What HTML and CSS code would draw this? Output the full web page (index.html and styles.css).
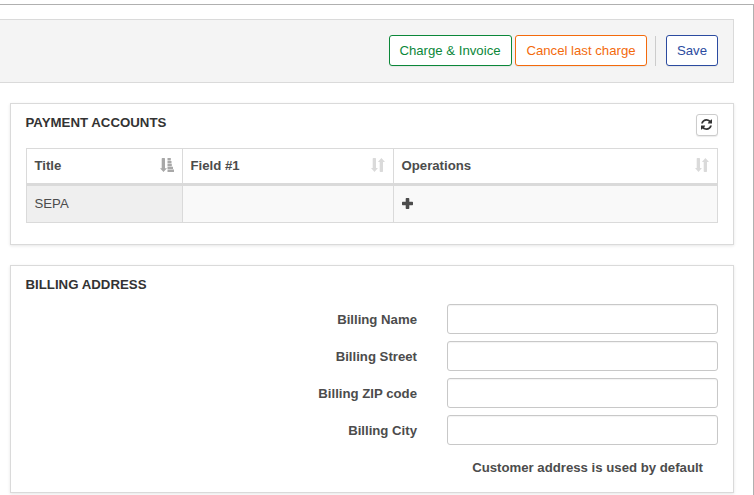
FILE: index.html
```html
<!DOCTYPE html>
<html lang="en">
<head>
<meta charset="utf-8">
<title>Customer billing</title>
<link rel="stylesheet" href="styles.css">
</head>
<body>
<svg class="defs" aria-hidden="true">
  <symbol id="sort" viewBox="0 0 14 14"><path d="M1.700 .7Q1.700 0 2.400 0H4.300Q5 0 5 .7V10H6.900L3.500 14 0 10H1.700zM8.700 13.300Q8.700 14 9.400 14H11.300Q12 14 12 13.300V4H14L10.400 0 6.900 4H8.700z"/></symbol>
  <symbol id="sort-asc" viewBox="0 0 14 14"><path d="M1.700 .7Q1.700 0 2.400 0H4.300Q5 0 5 .7V10.300H7L3.500 14 0 10.300H1.700zM7.500 0h3.300v2.400H7.500zM7.500 2.900h4v2.400h-4zM7.500 5.800h4.300v2.400H7.500zM7.500 8.700h5.500v2.300H7.500zM7.500 11.500H14V14H7.500z"/></symbol>
</svg>
<main class="frame">
  <div class="toolbar">
    <button class="btn green">Charge &amp; Invoice</button>
    <button class="btn orange">Cancel last charge</button>
    <span class="divider"></span>
    <button class="btn blue">Save</button>
  </div>
  <section class="panel accounts">
    <header class="panel-head">
      <h2>PAYMENT ACCOUNTS</h2>
      <button class="refresh" aria-label="Refresh"><svg viewBox="0 0 1536 1536"><path d="M1511 928q0 5-1 7-64 268-268 434.5t-478 166.5q-146 0-282.500-55t-243.500-157l-129 129q-19 19-45 19t-45-19-19-45v-448q0-26 19-45t45-19h448q26 0 45 19t19 45-19 45l-137 137q71 66 161 102t187 36q134 0 250-65t186-179q11-17 53-117 8-23 30-23h192q13 0 22.500 9.500t9.500 22.500zm25-800v448q0 26-19 45t-45 19h-448q-26 0-45-19t-19-45 19-45l138-138q-148-137-349-137-134 0-250 65t-186 179q-11 17-53 117-8 23-30 23h-199q-13 0-22.500-9.500t-9.500-22.500v-7q65-268 270-434.500t480-166.500q146 0 284 55.500t245 156.500l130-129q19-19 45-19t45 19 19 45z"/></svg></button>
    </header>
    <table>
      <colgroup><col class="c1"><col class="c2"><col class="c3"></colgroup>
      <thead><tr>
        <th><div class="th">Title<svg class="sort active"><use href="#sort-asc"/></svg></div></th>
        <th><div class="th">Field #1<svg class="sort"><use href="#sort"/></svg></div></th>
        <th><div class="th">Operations<svg class="sort"><use href="#sort"/></svg></div></th>
      </tr></thead>
      <tbody><tr>
        <td class="sorted">SEPA</td><td></td>
        <td><svg class="plus" viewBox="0 0 11 11"><path d="M4.400 0h2.200q.7 0 .7.700v3.100h3q.7 0 .7.700v2q0 .7-.7.700h-3v3.100q0 .7-.7.700H4.400q-.7 0-.7-.7V7.200h-3Q0 7.200 0 6.500v-2q0-.7.7-.7h3V.7q0-.7.7-.7z"/></svg></td>
      </tr></tbody>
    </table>
  </section>
  <section class="panel address">
    <h2>BILLING ADDRESS</h2>
    <form>
      <label for="name">Billing Name</label><input id="name">
      <label for="street">Billing Street</label><input id="street">
      <label for="zip">Billing ZIP code</label><input id="zip">
      <label for="city">Billing City</label><input id="city">
    </form>
    <p class="note">Customer address is used by default</p>
  </section>
</main>
</body>
</html>
```
FILE: styles.css
```css
* { box-sizing: border-box; }
body {
  margin: 0;
  padding-top: 4px;
  height: 495px;
  overflow: hidden;
  background: #fff;
  color: #4c4c4c;
  font: 13.2px/20px "Liberation Sans", Arial, sans-serif;
}
.defs { display: none; }
svg { display: block; fill: currentColor; }
.frame {
  height: 491px;
  padding: 14px 19px 0 0;
  border-top: 1px solid #b0b0b0;
  border-right: 1px solid #b0b0b0;
}
.toolbar {
  display: flex;
  justify-content: flex-end;
  height: 64px;
  padding: 15px 15px 0 0;
  border: 1px solid #dadada;
  border-left: 0;
  background: #f4f4f4;
}
.btn {
  height: 31px;
  padding: 0;
  border: 1px solid currentColor;
  border-radius: 3px;
  background: #fff;
  font: inherit;
  box-shadow: 0 1px 1px rgba(0, 0, 0, .06);
}
.green { width: 123px; margin-right: 3px; padding-right: 1px; color: #0b8739; }
.orange { width: 132px; color: #f36a0c; }
.blue { width: 52px; color: #2b4ba0; }
.divider { width: 1px; height: 30px; margin: 1px 10px 0 8px; background: #ccc; }
.panel {
  margin: 20px 0 0 10px;
  padding: 10px 15px 0;
  border: 1px solid #dadada;
  box-shadow: 0 1px 3px rgba(0, 0, 0, .1);
}
.accounts { height: 142px; }
.address { height: 228px; }
.panel-head { display: flex; justify-content: space-between; height: 34px; }
h2 {
  margin: 0 0 0 -.5px;
  color: #333;
  font-size: 13.25px;
  line-height: 18px;
}
.refresh {
  display: flex;
  align-items: center;
  justify-content: center;
  width: 22px;
  height: 22px;
  padding: 0 1px 1px 0;
  border: 1px solid #ccc;
  border-radius: 3px;
  background: #fff;
  color: #333;
  box-shadow: 0 1px 1px rgba(0, 0, 0, .08);
}
.refresh svg { width: 11px; height: 11px; }
table {
  width: 692px;
  border-collapse: separate;
  border-spacing: 0;
  table-layout: fixed;
  border-top: 1px solid #dadada;
  border-left: 1px solid #dadada;
}
.c1 { width: 156px; }
.c2 { width: 211px; }
th, td { padding: 0 8px 0 7.5px; border-right: 1px solid #dadada; text-align: left; }
th { height: 37px; border-bottom: 3px solid #dadada; }
td { height: 37px; border-bottom: 1px solid #dadada; background: #f9f9f9; }
td.sorted { background: #efefef; }
.th { display: flex; align-items: center; justify-content: space-between; }
.sort { width: 14px; height: 14px; margin-bottom: 2px; color: #dadada; }
.sort.active { color: #a8a8a8; }
.plus { width: 11px; height: 11px; margin-bottom: 1px; }
form {
  display: grid;
  grid-template-columns: 391px 271px;
  column-gap: 30px;
  row-gap: 7px;
  margin-top: 10px;
}
label {
  height: 30px;
  padding-top: 1px;
  font-weight: bold;
  line-height: 30px;
  text-align: right;
}
input {
  width: 271px;
  height: 30px;
  border: 1px solid #c8c8c8;
  border-radius: 3px;
  background: #fff;
  box-shadow: inset 0 1px 1px rgba(0, 0, 0, .05);
}
.note { margin: 13px 15px 0 0; font-weight: bold; text-align: right; }
```
